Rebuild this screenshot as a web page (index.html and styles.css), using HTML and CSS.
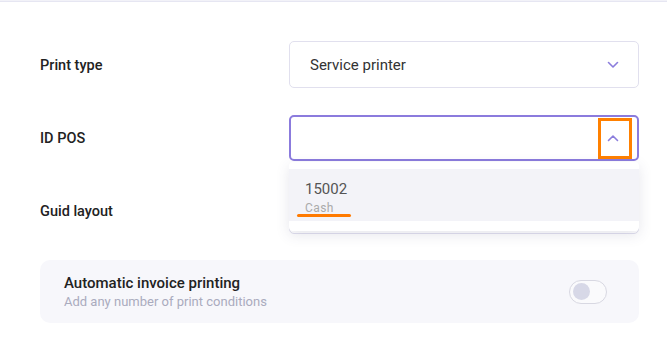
FILE: index.html
```html
<!DOCTYPE html>
<html>
<head>
<meta charset="utf-8">
<link rel="stylesheet" href="styles.css">
</head>
<body>
<div class="topline"></div>
<div class="form">
  <div class="row">
    <div class="label">Print type</div>
    <div class="select">
      <span class="value">Service printer</span>
      <svg class="chev" width="12" height="8" viewBox="0 0 12 8"><polyline points="1.5,1.5 6,6 10.5,1.5" fill="none" stroke="#8b7ddc" stroke-width="1.6" stroke-linecap="round" stroke-linejoin="round"/></svg>
    </div>
  </div>
  <div class="row">
    <div class="label">ID POS</div>
    <div class="select open">
      <span class="value"></span>
      <span class="hl-box"></span>
      <svg class="chev" width="12" height="8" viewBox="0 0 12 8"><polyline points="1.5,6.5 6,2 10.5,6.5" fill="none" stroke="#8b7ddc" stroke-width="1.6" stroke-linecap="round" stroke-linejoin="round"/></svg>
      <div class="dropdown">
        <div class="option">
          <div class="opt-main">15002</div>
          <div class="opt-sub">Cash</div>
          <span class="underline"></span>
        </div>
      </div>
    </div>
  </div>
  <div class="row">
    <div class="label">Guid layout</div>
    <div class="select">
      <span class="value"></span>
    </div>
  </div>
  <div class="card">
    <div class="card-text">
      <div class="card-title">Automatic invoice printing</div>
      <div class="card-sub">Add any number of print conditions</div>
    </div>
    <div class="toggle"><span class="knob"></span></div>
  </div>
</div>
</body>
</html>
```
FILE: styles.css
```css
* { box-sizing: border-box; }
html, body { margin: 0; padding: 0; background: #fff; }
body { font-family: Roboto, "Noto Sans", sans-serif; color: #222; }
.topline { height: 2px; border-bottom: 1px solid #e6e6f2; background: #f2f2f8; }
.form { padding: 39px 28px 0 40px; }
.row { display: flex; align-items: center; height: 47px; margin-bottom: 26px; }
.label { width: 249px; font-size: 14.5px; font-weight: 500; color: #222; padding-top: 2px; }
.select {
  position: relative; flex: 1; height: 47px;
  border: 1px solid #e1e0ee; border-radius: 5px;
  display: flex; align-items: center; padding: 0 20px;
  background: #fff;
}
.select .value { flex: 1; font-size: 15px; color: #333; }
.select.open { border: 2px solid #8b7bdd; height: 46px; padding: 0 19px; }
.chev { flex: none; margin-right: -1px; }
.hl-box {
  position: absolute; right: 5px; top: 1px; width: 34px; height: 41px;
  border: 3px solid #ff8000;
}
.dropdown {
  position: absolute; left: -2px; right: -2px; top: calc(100% + 3px);
  background: #fff; border-radius: 4px; padding: 7px 0 10px;
  box-shadow: 0 4px 14px rgba(60, 60, 110, 0.13);
  z-index: 5;
}
.option { position: relative; background: #f3f3f8; height: 52px; padding: 10px 16px 0; }
.opt-main { font-size: 15px; color: #555; line-height: 20px; }
.opt-sub { font-size: 12px; color: #aaa; line-height: 16px; margin-top: 1px; letter-spacing: 0.4px; }
.underline {
  position: absolute; left: 8px; top: 45px; width: 54px; height: 3px;
  border-radius: 2px; background: #ff7a00;
}
.card {
  height: 63px; background: #f7f7fb; border-radius: 10px;
  display: flex; align-items: center; padding: 0 32px 0 24px;
}
.card-text { flex: 1; }
.card-title { font-size: 15px; font-weight: 500; color: #222; line-height: 19px; }
.card-sub { font-size: 13px; color: #aaabbe; line-height: 17px; margin-top: 0; }
.toggle {
  width: 38px; height: 24px; border: 1px solid #d8d8e2; border-radius: 12px;
  background: #fafafc; display: flex; align-items: center; padding: 0 3px;
}
.knob { width: 17px; height: 17px; border-radius: 50%; background: #d7d8e7; }
```
